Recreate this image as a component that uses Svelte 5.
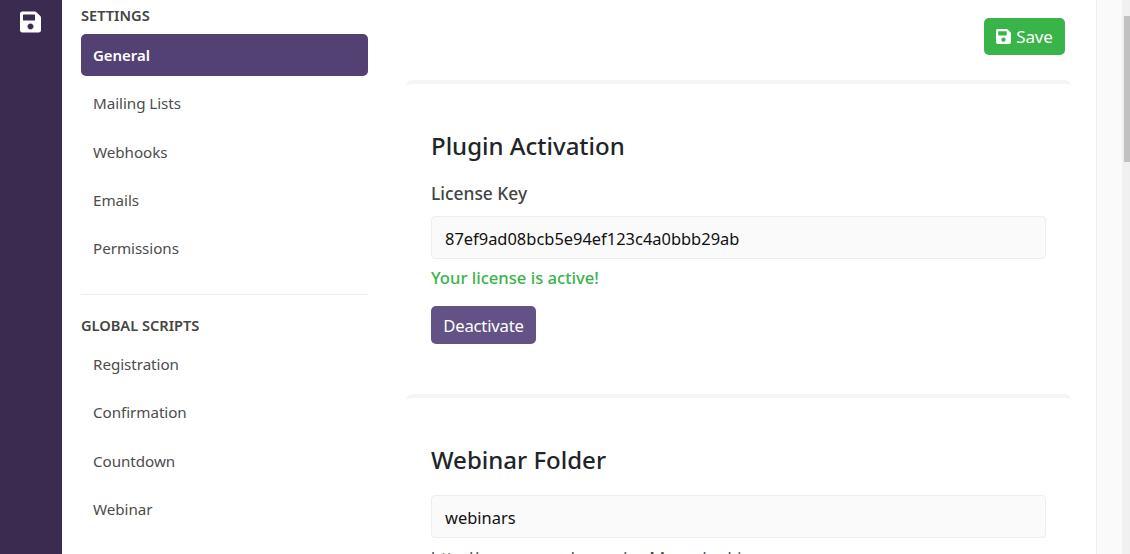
<script>
  const saveIcon = "M433.941 129.941l-83.882-83.882A48 48 0 0 0 316.118 32H48C21.49 32 0 53.49 0 80v352c0 26.51 21.49 48 48 48h352c26.51 0 48-21.49 48-48V163.882a48 48 0 0 0-14.059-33.941zM224 416c-35.346 0-64-28.654-64-64 0-35.346 28.654-64 64-64s64 28.654 64 64c0 35.346-28.654 64-64 64zm96-304.52V212c0 6.627-5.373 12-12 12H76c-6.627 0-12-5.373-12-12V108c0-6.627 5.373-12 12-12h228.52c3.183 0 6.235 1.264 8.485 3.515l3.48 3.48A11.996 11.996 0 0 1 320 111.48z";
  const settings = ["General", "Mailing Lists", "Webhooks", "Emails", "Permissions"];
  const scripts = ["Registration", "Confirmation", "Countdown", "Webinar"];
</script>

<div class="page">
  <aside class="rail">
    <svg class="rail-icon" viewBox="0 0 448 512" aria-hidden="true"><path d={saveIcon} /></svg>
  </aside>

  <nav class="side">
    <h6 class="group first">SETTINGS</h6>
    <ul>
      {#each settings as item, i}
        <li class:active={i === 0}>{item}</li>
      {/each}
    </ul>
    <hr />
    <h6 class="group">GLOBAL SCRIPTS</h6>
    <ul>
      {#each scripts as item}
        <li>{item}</li>
      {/each}
    </ul>
  </nav>

  <main class="main">
    <div class="actions">
      <button class="save">
        <svg viewBox="0 0 448 512" aria-hidden="true"><path d={saveIcon} /></svg>
        Save
      </button>
    </div>

    <section class="card">
      <h2>Plugin Activation</h2>
      <label for="lic">License Key</label>
      <input id="lic" value="87ef9ad08bcb5e94ef123c4a0bbb29ab" readonly />
      <p class="ok">Your license is active!</p>
      <button class="deactivate">Deactivate</button>
    </section>

    <section class="card second">
      <h2>Webinar Folder</h2>
      <input class="nolabel" value="webinars" readonly />
      <p class="url">http://www.example.com/<b>webinars</b>/webinar</p>
    </section>
  </main>

  <div class="panel"></div>
  <div class="scrollbar"><div class="thumb"></div></div>
</div>

<style>
  :global(body) {
    margin: 0;
    background: #fff;
    overflow: hidden;
  }
  .page {
    display: flex;
    width: 1130px;
    height: 554px;
    overflow: hidden;
    font-family: "Noto Sans", "Open Sans", sans-serif;
    font-size: 15.2px;
    color: #444;
  }
  .rail {
    flex: 0 0 62px;
    background: #3a2c50;
    box-sizing: border-box;
    padding: 10px 0 0 20px;
  }
  .rail-icon {
    display: block;
    width: 21px;
    height: 24px;
    fill: #fff;
  }
  .side {
    flex: 0 0 287px;
    margin-left: 19px;
  }
  .group {
    margin: 0;
    font-size: 14.6px;
    line-height: 20px;
    font-weight: 600;
    color: #444;
  }
  .group.first {
    margin-top: 5px;
    margin-bottom: 9px;
  }
  .side hr {
    border: 0;
    border-top: 1px solid #eee;
    margin: 25px 0 20px;
  }
  .side ul {
    list-style: none;
    margin: 0;
    padding: 0;
    display: flex;
    flex-direction: column;
    gap: 6.25px;
  }
  .side li {
    height: 42px;
    line-height: 42px;
    padding-left: 12px;
    border-radius: 5px;
    letter-spacing: -0.05px;
    color: #4d4d4d;
  }
  .side li.active {
    background: #544174;
    color: #fff;
    font-weight: 600;
    font-size: 15px;
  }
  .group:not(.first) + ul {
    margin-top: 8px;
  }
  .main {
    flex: 0 0 664px;
    margin-left: 38px;
    padding-top: 18px;
  }
  .actions {
    display: flex;
    justify-content: flex-end;
    padding-right: 6px;
    margin-bottom: 25px;
  }
  button {
    font: inherit;
    border: 0;
    color: #fff;
    border-radius: 5px;
    padding: 0;
  }
  .save {
    display: flex;
    align-items: center;
    justify-content: center;
    gap: 5px;
    width: 81px;
    height: 37px;
    background: #38b449;
    font-size: 17px;
    letter-spacing: -0.2px;
  }
  .save svg {
    width: 15px;
    height: 17px;
    fill: #fff;
  }
  .card {
    box-sizing: border-box;
    border-top: 4px solid #f5f5f5;
    border-radius: 6px 6px 0 0;
    padding: 44px 25px 50px;
  }
  .card.second {
    padding-top: 44px;
    padding-bottom: 0;
  }
  h2 {
    margin: 0;
    font-size: 24px;
    line-height: 36px;
    font-weight: 500;
    color: #212529;
  }
  label {
    display: block;
    margin-top: 18px;
    line-height: 22px;
    font-size: 17.4px;
    font-weight: 500;
    color: #444;
  }
  input {
    display: block;
    box-sizing: border-box;
    width: 615px;
    height: 43px;
    margin-top: 12px;
    padding: 1px 13px 0;
    border: 1px solid #eee;
    border-radius: 4px;
    background: #fafafa;
    font: inherit;
    font-size: 16.45px;
    color: #111;
    outline: none;
  }
  input.nolabel {
    margin-top: 17px;
  }
  .ok {
    margin: 8px 0 0;
    line-height: 22px;
    font-size: 16.6px;
    font-weight: 500;
    color: #38b449;
  }
  .deactivate {
    display: block;
    width: 105px;
    height: 38px;
    margin-top: 17px;
    background: #625285;
    font-size: 16.7px;
    letter-spacing: -0.2px;
  }
  .url {
    margin: 8px 0 0;
    line-height: 24px;
    font-size: 16px;
    color: #444;
    white-space: nowrap;
  }
  .panel {
    position: absolute;
    left: 1096px;
    top: 0;
    width: 26px;
    height: 554px;
    box-sizing: border-box;
    border-left: 1px solid #eee;
    background: #fafafa;
  }
  .scrollbar {
    position: absolute;
    left: 1122px;
    top: 0;
    width: 8px;
    height: 554px;
    background: #f0f0f0;
  }
  .thumb {
    position: absolute;
    left: 2px;
    top: 16px;
    width: 6px;
    height: 146px;
    background: #c1c1c1;
  }
</style>
